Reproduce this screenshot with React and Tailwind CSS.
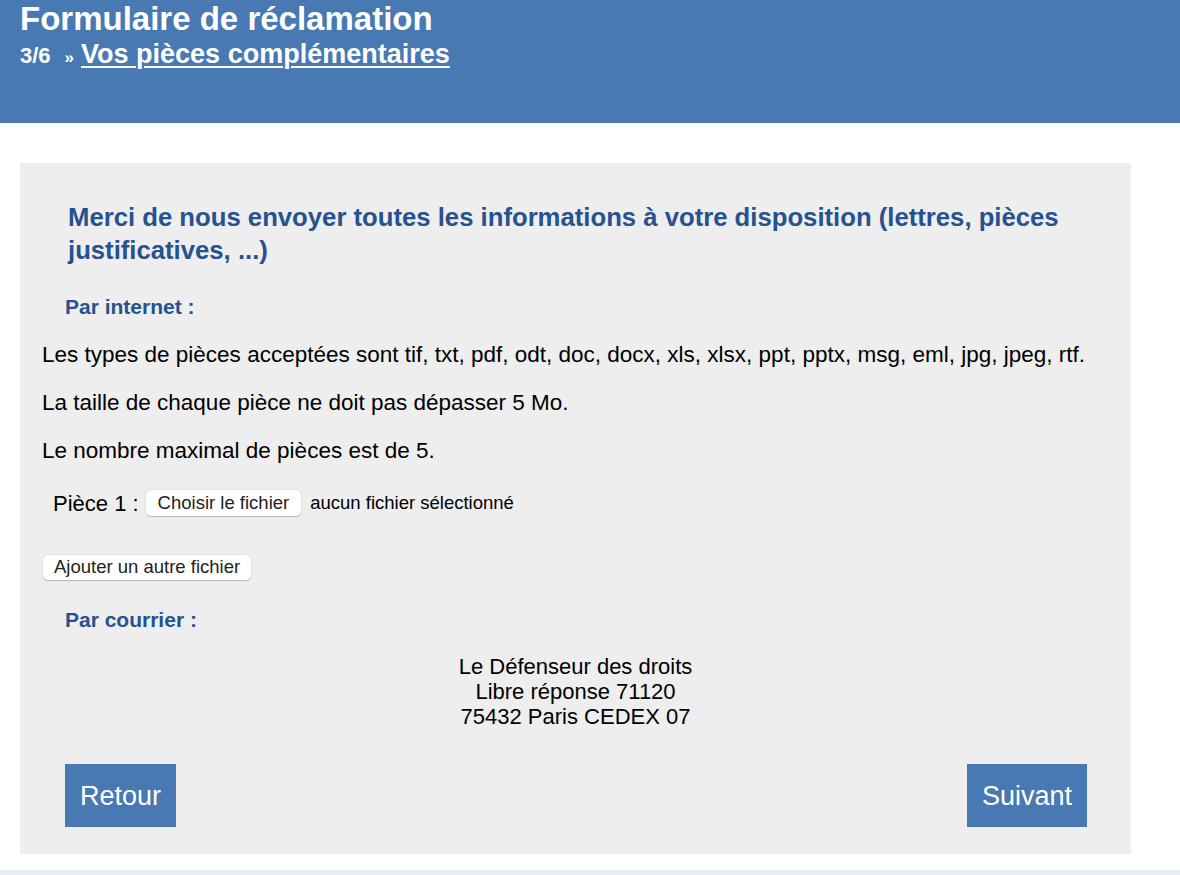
import React from 'react';

const font = { fontFamily: '"Liberation Sans", Arial, Helvetica, sans-serif' };

export default function App() {
  return (
    <div className="min-h-[875px] bg-white text-black" style={font}>
      {/* Header */}
      <header className="h-[123px] bg-[#4879b3] px-[20px] text-white">
        <h1 className="text-[33px] font-bold leading-[38px]">Formulaire de réclamation</h1>
        <div className="mt-[1px] flex items-baseline font-bold leading-[30px]">
          <span className="text-[22px]">3/6</span>
          <span className="ml-[14px] text-[17px]">»</span>
          <a href="#" className="ml-[7px] text-[27px] underline decoration-[2px] underline-offset-[3px]">
            Vos pièces complémentaires
          </a>
        </div>
      </header>

      {/* Panel */}
      <main className="ml-[20px] mt-[40px] w-[1111px] bg-[#eeeeee] pt-[38px] pb-[27px]">
        <h2 className="px-[48px] text-[25.7px] font-bold leading-[33px] text-[#26528f]">
          Merci de nous envoyer toutes les informations à votre disposition (lettres, pièces justificatives, ...)
        </h2>

        <h3 className="mt-[28px] pl-[45px] text-[21px] font-bold leading-[23px] text-[#26528f]">Par internet :</h3>

        <div className="mt-[24px] pl-[22px] text-[22.5px] leading-[25px]">
          <p>Les types de pièces acceptées sont tif, txt, pdf, odt, doc, docx, xls, xlsx, ppt, pptx, msg, eml, jpg, jpeg, rtf.</p>
          <p className="mt-[23px]">La taille de chaque pièce ne doit pas dépasser 5 Mo.</p>
          <p className="mt-[23px]">Le nombre maximal de pièces est de 5.</p>
        </div>

        <div className="mt-[27px] flex h-[26px] items-center pl-[33px]">
          <span className="text-[22px]">Pièce 1 :</span>
          <button className="ml-[7px] h-[26px] rounded-[5px] bg-white px-[12px] text-[18.5px] leading-none text-[#222] shadow-[0_0.5px_1.5px_rgba(0,0,0,0.25)]">
            Choisir le fichier
          </button>
          <span className="ml-[9px] text-[18.5px]">aucun fichier sélectionné</span>
        </div>

        <button className="ml-[23px] mt-[39px] h-[25px] rounded-[5px] bg-white px-[11px] text-[18.5px] leading-none text-[#222] shadow-[0_0.5px_1.5px_rgba(0,0,0,0.25)]">
          Ajouter un autre fichier
        </button>

        <h3 className="mt-[28px] pl-[45px] text-[21px] font-bold leading-[23px] text-[#26528f]">Par courrier :</h3>

        <div className="mt-[23px] text-center text-[22px] leading-[25px]">
          <p>Le Défenseur des droits</p>
          <p>Libre réponse 71120</p>
          <p>75432 Paris CEDEX 07</p>
        </div>

        <div className="mt-[35px] flex justify-between pl-[45px] pr-[44px]">
          <button className="h-[63px] w-[111px] bg-[#4879b3] text-[27px] text-white">Retour</button>
          <button className="h-[63px] w-[120px] bg-[#4879b3] text-[27px] text-white">Suivant</button>
        </div>
      </main>

      <div className="mt-[16px] h-[5px] bg-[#e8eef6]" />
    </div>
  );
}
